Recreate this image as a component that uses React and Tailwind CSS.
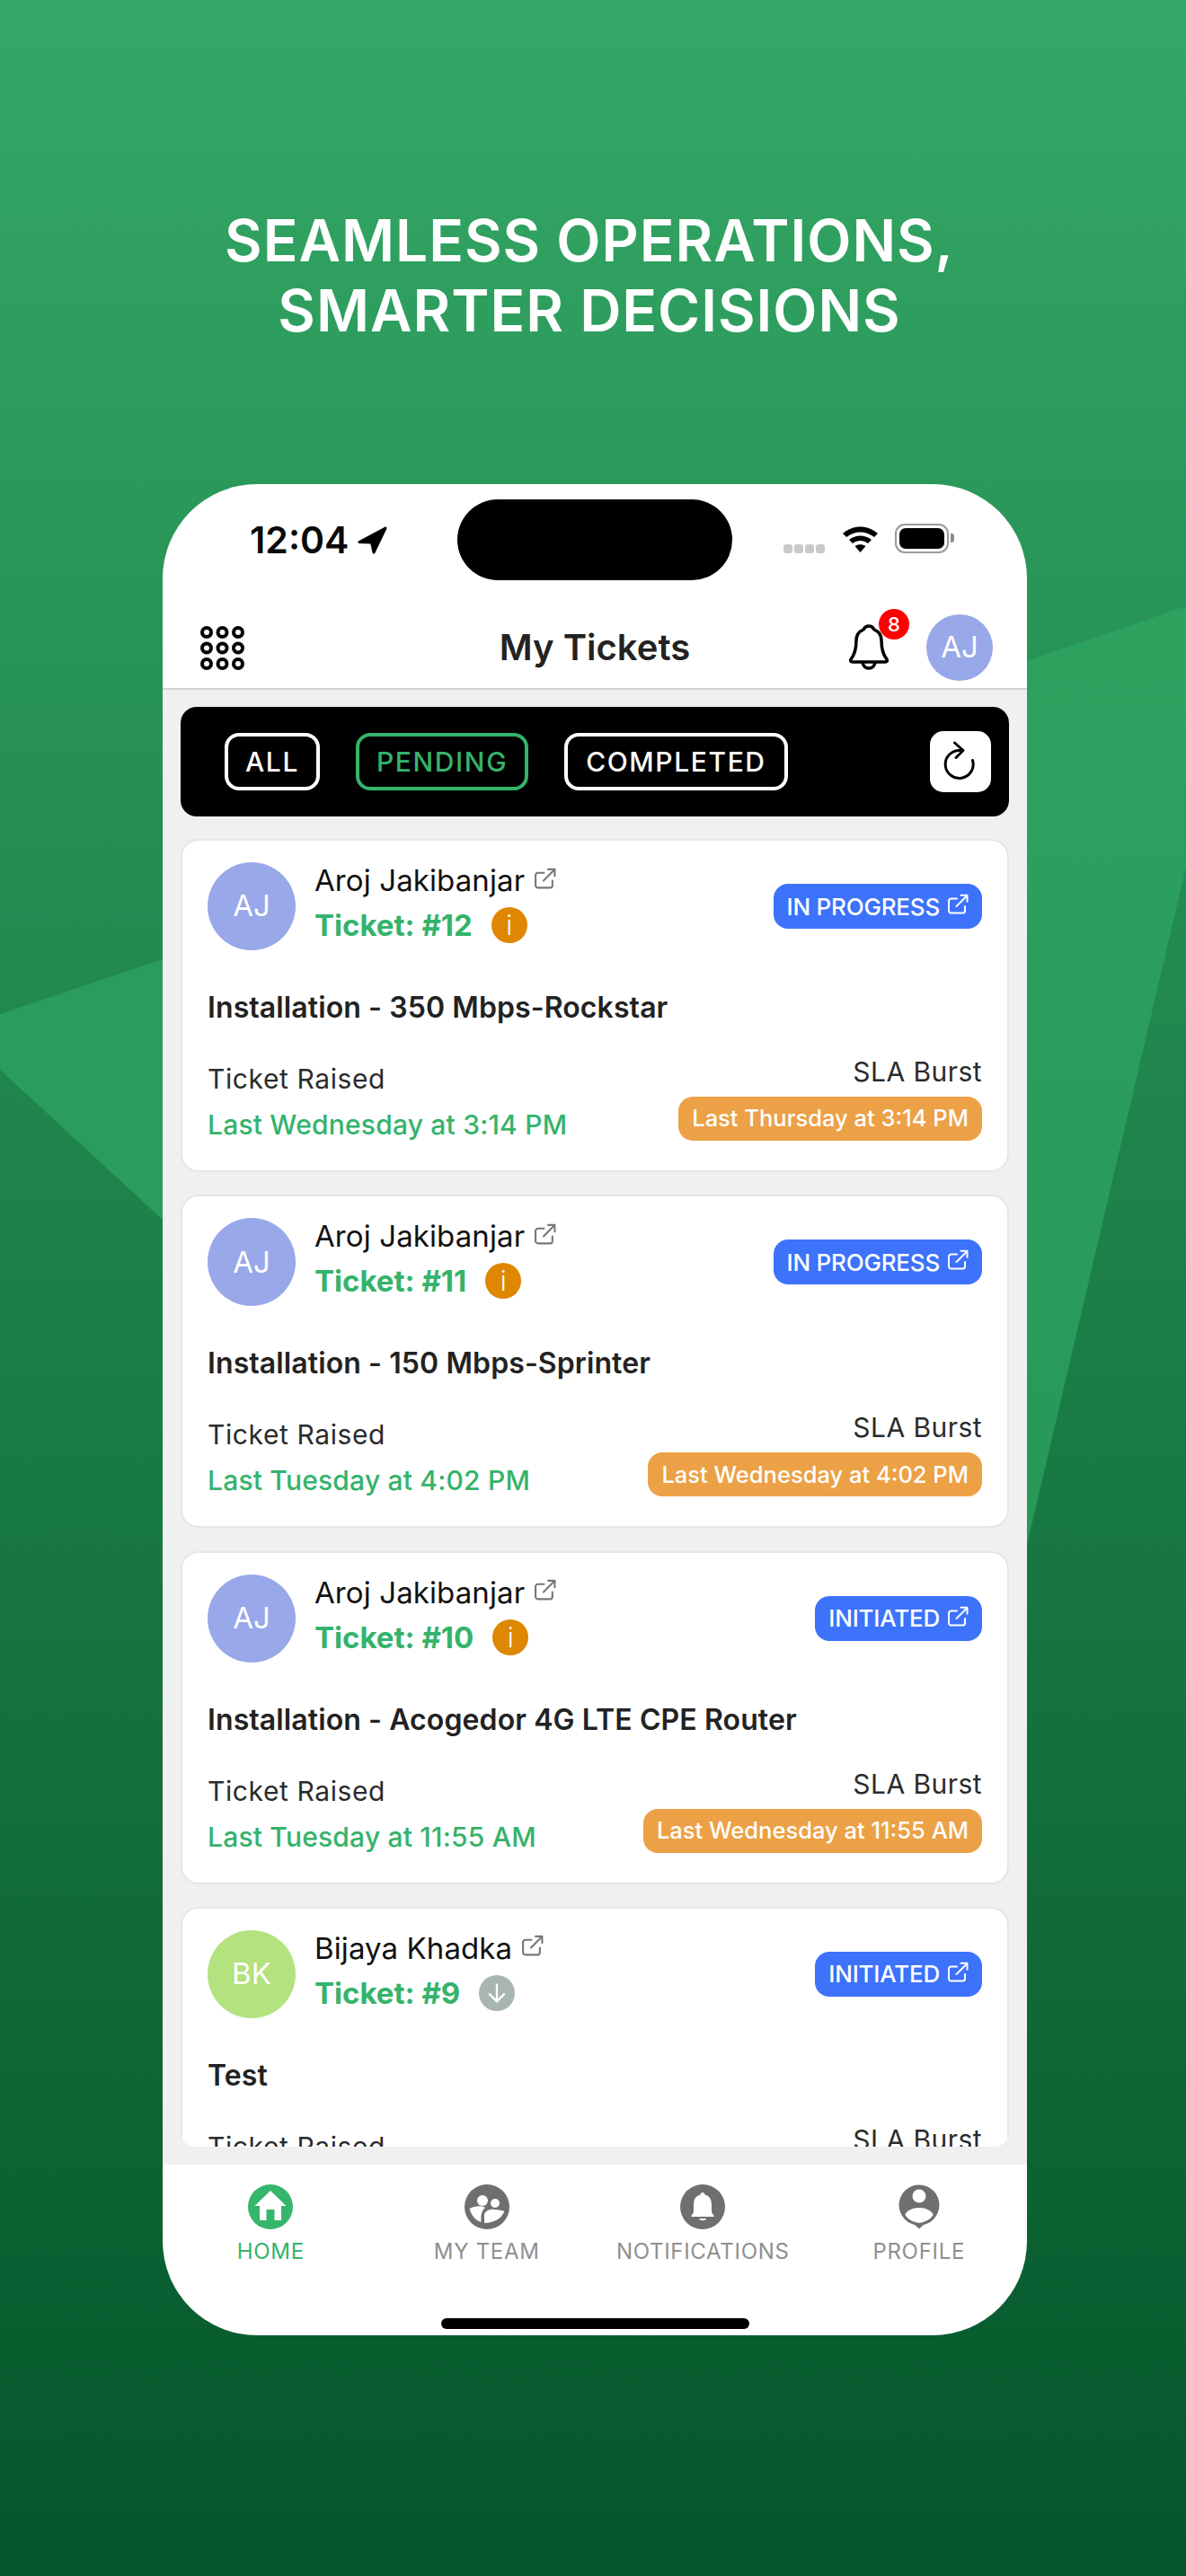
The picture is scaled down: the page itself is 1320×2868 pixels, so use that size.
import React from "react";

const Ext = ({ className }) => (
  <svg viewBox="0 0 24 24" fill="none" stroke="currentColor" strokeWidth="2" strokeLinecap="round" strokeLinejoin="round" className={className}>
    <path d="M20 14v5a2.5 2.5 0 0 1-2.5 2.5h-13A2.5 2.5 0 0 1 2 19V8a2.5 2.5 0 0 1 2.5-2.5H11" />
    <path d="M10.5 14 22 2.5" />
    <path d="M15.5 1.8H22.5V8.8" />
  </svg>
);

const tickets = [
  { name: "Aroj Jakibanjar", initials: "AJ", av: "bg-[#98a8e8]", num: "#12", mark: "i", status: "IN PROGRESS", title: "Installation - 350 Mbps-Rockstar", raised: "Last Wednesday at 3:14 PM", burst: "Last Thursday at 3:14 PM" },
  { name: "Aroj Jakibanjar", initials: "AJ", av: "bg-[#98a8e8]", num: "#11", mark: "i", status: "IN PROGRESS", title: "Installation - 150 Mbps-Sprinter", raised: "Last Tuesday at 4:02 PM", burst: "Last Wednesday at 4:02 PM" },
  { name: "Aroj Jakibanjar", initials: "AJ", av: "bg-[#98a8e8]", num: "#10", mark: "i", status: "INITIATED", title: "Installation - Acogedor 4G LTE CPE Router", raised: "Last Tuesday at 11:55 AM", burst: "Last Wednesday at 11:55 AM" },
  { name: "Bijaya Khadka", initials: "BK", av: "bg-[#b3e27f]", num: "#9", mark: "down", status: "INITIATED", title: "Test", raised: "Last Tuesday at 11:50 AM", burst: "Last Wednesday at 11:50 AM" },
];

function Card({ t }) {
  return (
    <div className="h-[371px] shrink-0 rounded-[20px] border-2 border-[#e6e6e6] bg-white pl-[28px] pr-[28px] pt-[24px]">
      <div className="flex h-[98px] items-center">
        <div className={`flex h-[98px] w-[98px] items-center justify-center rounded-full text-[33px] text-white ${t.av}`}>{t.initials}</div>
        <div className="ml-[21px] flex flex-col gap-[10px] self-start">
          <div className="flex h-[40px] items-center text-[33px] leading-[40px] tracking-[0.1px] text-[#111111]">
            {t.name}
            <Ext className="ml-[10px] mb-[4px] h-[25px] w-[25px] text-[#777777]" />
          </div>
          <div className="flex h-[40px] items-center text-[33px] font-bold leading-[40px] text-[#34b36b]">
            Ticket: {t.num}
            {t.mark === "i" ? (
              <span className="ml-[21px] flex h-[40px] w-[40px] items-center justify-center rounded-full bg-[#df8700] text-[30px] font-light text-white">i</span>
            ) : (
              <span className="ml-[21px] flex h-[40px] w-[40px] items-center justify-center rounded-full bg-[#a9b5b3] text-white">
                <svg viewBox="0 0 24 24" fill="none" stroke="currentColor" strokeWidth="2" strokeLinecap="round" strokeLinejoin="round" className="h-[28px] w-[28px]">
                  <path d="M12 4v16" />
                  <path d="m5 13 7 7 7-7" />
                </svg>
              </span>
            )}
          </div>
        </div>
        <div className="ml-auto flex h-[50px] items-center rounded-[16px] bg-[#3d72fb] px-[15px] text-[26px] font-medium tracking-[-0.2px] text-white">
          {t.status}
          <Ext className="ml-[8px] mb-[4px] h-[24px] w-[24px]" />
        </div>
      </div>
      <div className="mt-[44px] h-[40px] text-[32px] font-semibold leading-[40px] tracking-[0.1px] text-[#222222]">{t.title}</div>
      <div className="mt-[33px] flex justify-between">
        <div className="pt-[8px]">
          <div className="h-[36px] text-[30px] leading-[36px] tracking-[0.6px] text-[#2b2b2b]">Ticket Raised</div>
          <div className="mt-[15px] h-[36px] text-[30px] font-medium leading-[36px] tracking-[0.2px] text-[#34b36b]">{t.raised}</div>
        </div>
        <div className="flex flex-col items-end">
          <div className="h-[36px] text-[30px] leading-[36px] tracking-[0.45px] text-[#2b2b2b]">SLA Burst</div>
          <div className="mt-[10px] flex h-[49px] items-center rounded-[16px] bg-[#eca146] px-[15px] text-[25.5px] font-medium text-white">{t.burst}</div>
        </div>
      </div>
    </div>
  );
}

const tabs = [
  {
    label: "HOME",
    color: "text-[#34b36b]",
    icon: (
      <svg viewBox="0 0 50 50" className="h-[50px] w-[50px]">
        <circle cx="25" cy="25" r="25" fill="#36b56c" />
        <path d="M25 7 42.5 24H37V40H29.5V28H20.5V40H13V24H7.5Z" fill="#fff" />
      </svg>
    ),
  },
  {
    label: "MY TEAM",
    color: "text-[#8f8f8f]",
    icon: (
      <svg viewBox="0 0 50 50" className="h-[50px] w-[50px]">
        <circle cx="25" cy="25" r="25" fill="#6f6f6f" />
        <circle cx="20" cy="18" r="6" fill="#fff" />
        <circle cx="34" cy="21" r="5" fill="#fff" />
        <path d="M5.5 27C10 24 20 23 23 26 19 29 18 34 18.5 42 12 40 8 35 5.5 27Z" fill="#fff" />
        <path d="M22 43V33C24 28 30 27 34 28 38 28 42 29 44.5 30 41 38 33 43 22 43Z" fill="#fff" />
      </svg>
    ),
  },
  {
    label: "NOTIFICATIONS",
    color: "text-[#8f8f8f]",
    icon: (
      <svg viewBox="0 0 50 50" className="h-[50px] w-[50px]">
        <circle cx="25" cy="25" r="25" fill="#6f6f6f" />
        <path d="M25 9c1.500 0 2.500 1 2.500 2.500C33 13 35 17 35 23V29C35 32 36 33 37.500 34.500V36H12.500V34.500C14 33 15 32 15 29V23C15 17 17 13 22.500 11.500 22.500 10 23.500 9 25 9Z" fill="#fff" />
        <path d="M21 38H29C28 41 22 41 21 38Z" fill="#fff" />
      </svg>
    ),
  },
  {
    label: "PROFILE",
    color: "text-[#8f8f8f]",
    icon: (
      <svg viewBox="0 0 50 50" className="h-[50px] w-[50px]">
        <circle cx="25" cy="23" r="22.500" fill="#6f6f6f" />
        <path d="M18 43 25 49.500 32 43Z" fill="#6f6f6f" />
        <circle cx="25" cy="13" r="7.500" fill="#fff" />
        <path d="M25 26C34 26 40.500 31 40.500 34 38 39 31 42 25 43 19 42 12 39 9.500 34 9.500 31 16 26 25 26Z" fill="#fff" />
      </svg>
    ),
  },
];

export default function App() {
  return (
    <div className="relative h-[2868px] w-[1320px] overflow-hidden bg-[linear-gradient(180deg,#34a866_0%,#04562a_100%)] font-['Inter',sans-serif]">
      <svg viewBox="0 0 1320 2868" className="absolute inset-0 h-[2868px] w-[1320px]">
        <defs>
          <linearGradient id="facet" gradientUnits="userSpaceOnUse" x1="0" y1="675" x2="0" y2="1720">
            <stop offset="0" stopColor="#2da25f" />
            <stop offset="1" stopColor="#279858" />
          </linearGradient>
        </defs>
        <polygon points="0,1129 181,1068 181,1358 0,1191" fill="#2a9c5c" />
        <polygon points="1143,736 1320,675 1320,965 1143,1720" fill="url(#facet)" />
      </svg>

      <div className="relative">
        <h1 className="pr-[8px] pt-[229px] text-center text-[64px] font-semibold leading-[78px] tracking-[1px] text-white">
          SEAMLESS OPERATIONS,
          <br />
          SMARTER DECISIONS
        </h1>

        <div className="ml-[181px] mt-[154px] flex h-[2061px] w-[962px] flex-col overflow-hidden rounded-[105px] bg-white">
          <div className="flex h-[137px] shrink-0 pt-[17px]">
            <div className="flex h-[90px] w-[328px] items-center pl-[97px]">
              <span className="text-[41px] font-semibold leading-none text-[#0a0a0a]">12:04</span>
              <svg viewBox="0 0 33 31" className="ml-[10px] h-[31px] w-[33px]">
                <path d="M31 2 2 17.500 15.500 18 18 29Z" fill="#000" stroke="#000" strokeWidth="3" strokeLinejoin="round" />
              </svg>
            </div>
            <div className="h-[90px] w-[306px] rounded-[45px] bg-black" />
            <div className="flex h-[90px] flex-1 items-center pb-[4px] pl-[57px]">
              <div className="mt-[24px] flex gap-[2px]">
                <span className="h-[10px] w-[10px] rounded-[3px] bg-[#c9c9c9]" />
                <span className="h-[10px] w-[10px] rounded-[3px] bg-[#c9c9c9]" />
                <span className="h-[10px] w-[10px] rounded-[3px] bg-[#c9c9c9]" />
                <span className="h-[10px] w-[10px] rounded-[3px] bg-[#c9c9c9]" />
              </div>
              <svg viewBox="0 0 41 31" className="ml-[19px] h-[31px] w-[41px]">
                <path d="M1 10C12 0 29 0 40 10L36 14C27 6.500 14 6.500 5 14Z" fill="#000" />
                <path d="M8 17C15 11 26 11 33 17L29 21C24 17 17 17 12 21Z" fill="#000" />
                <path d="M14.500 24C18 21.500 23 21.500 26.500 24L20.500 31Z" fill="#000" />
              </svg>
              <div className="ml-[18px] flex items-center">
                <div className="flex h-[33px] w-[60px] items-center justify-center rounded-[11px] border-2 border-[#9a9a9a]">
                  <div className="h-[23px] w-[50px] rounded-[7px] bg-black" />
                </div>
                <div className="ml-[2px] h-[10px] w-[4px] rounded-r-[3px] bg-[#8a8a8a]" />
              </div>
            </div>
          </div>

          <div className="grid h-[92px] shrink-0 grid-cols-[1fr_auto_1fr] items-center border-b-2 border-[#d2d2d2]">
            <div className="pl-[42px]">
              <svg viewBox="0 0 49 49" className="h-[49px] w-[49px]">
                {[7, 24.5, 42].map((y) =>
                  [7, 24.5, 42].map((x) => <circle key={`${x}-${y}`} cx={x} cy={y} r="5" fill="none" stroke="#000" strokeWidth="4" />)
                )}
              </svg>
            </div>
            <div className="text-[40px] font-semibold leading-none text-[#222222]">My Tickets</div>
            <div className="flex items-center justify-end pr-[38px]">
              <div className="relative">
                <svg viewBox="0 0 44 52" fill="none" stroke="#000" strokeWidth="3.500" strokeLinejoin="round" className="h-[52px] w-[44px]">
                  <path d="M22 2C25 2 27 4 28 6 33 8 36 12 36 18 36 28 38 34 42 39 43 41 42 42 40 42H4C2 42 1 41 2 39 6 34 8 28 8 18 8 12 11 8 16 6 17 4 19 2 22 2Z" />
                  <path d="M15 42A7 7 0 0 0 29 42" />
                </svg>
                <span className="absolute left-[33px] top-[-17px] flex h-[34px] w-[34px] items-center justify-center rounded-full bg-[#fe0000] text-[22px] font-medium text-white">8</span>
              </div>
              <div className="ml-[42px] flex h-[74px] w-[74px] items-center justify-center rounded-full bg-[#98a8e8] text-[33px] text-white">AJ</div>
            </div>
          </div>

          <div className="flex min-h-0 flex-1 flex-col bg-[#f0f0f0] px-[20px] pb-[20px] pt-[19px]">
            <div className="flex h-[122px] shrink-0 items-center rounded-[18px] bg-black pl-[49px] pr-[20px]">
              <div className="flex gap-[40px]">
                <span className="flex h-[64px] items-center rounded-[16px] border-[4px] border-white px-[19px] text-[30px] font-medium tracking-[1.6px] text-white">ALL</span>
                <span className="flex h-[64px] items-center rounded-[16px] border-[4px] border-[#34b36b] px-[19px] text-[30px] font-medium tracking-[1.6px] text-[#34b36b]">PENDING</span>
                <span className="flex h-[64px] items-center rounded-[16px] border-[4px] border-white px-[20px] text-[30px] font-medium tracking-[1.6px] text-white">COMPLETED</span>
              </div>
              <div className="ml-auto flex h-[68px] w-[68px] items-center justify-center rounded-[15px] bg-white">
                <svg viewBox="0 0 48 48" fill="none" stroke="#000" strokeWidth="3" strokeLinecap="round" strokeLinejoin="round" className="h-[48px] w-[48px]">
                  <path d="M37.500 22.500A15.500 15.500 0 1 1 24 11.500" />
                  <path d="M17.500 3 27 11.500 19 19.500" />
                </svg>
              </div>
            </div>
            <div className="mt-[25px] flex min-h-0 flex-1 flex-col gap-[25.33px] overflow-hidden rounded-b-[16px]">
              {tickets.map((t) => (
                <Card key={t.num} t={t} />
              ))}
            </div>
          </div>

          <div className="flex h-[190px] shrink-0 flex-col">
            <div className="grid grid-cols-4 pt-[22px]">
              {tabs.map((t) => (
                <div key={t.label} className={`flex flex-col items-center ${t.color}`}>
                  {t.icon}
                  <span className="mt-[10px] text-[24px] leading-[30px] tracking-[0.7px]">{t.label}</span>
                </div>
              ))}
            </div>
            <div className="mx-auto mb-[7px] mt-auto h-[12px] w-[343px] rounded-full bg-black" />
          </div>
        </div>
      </div>
    </div>
  );
}
